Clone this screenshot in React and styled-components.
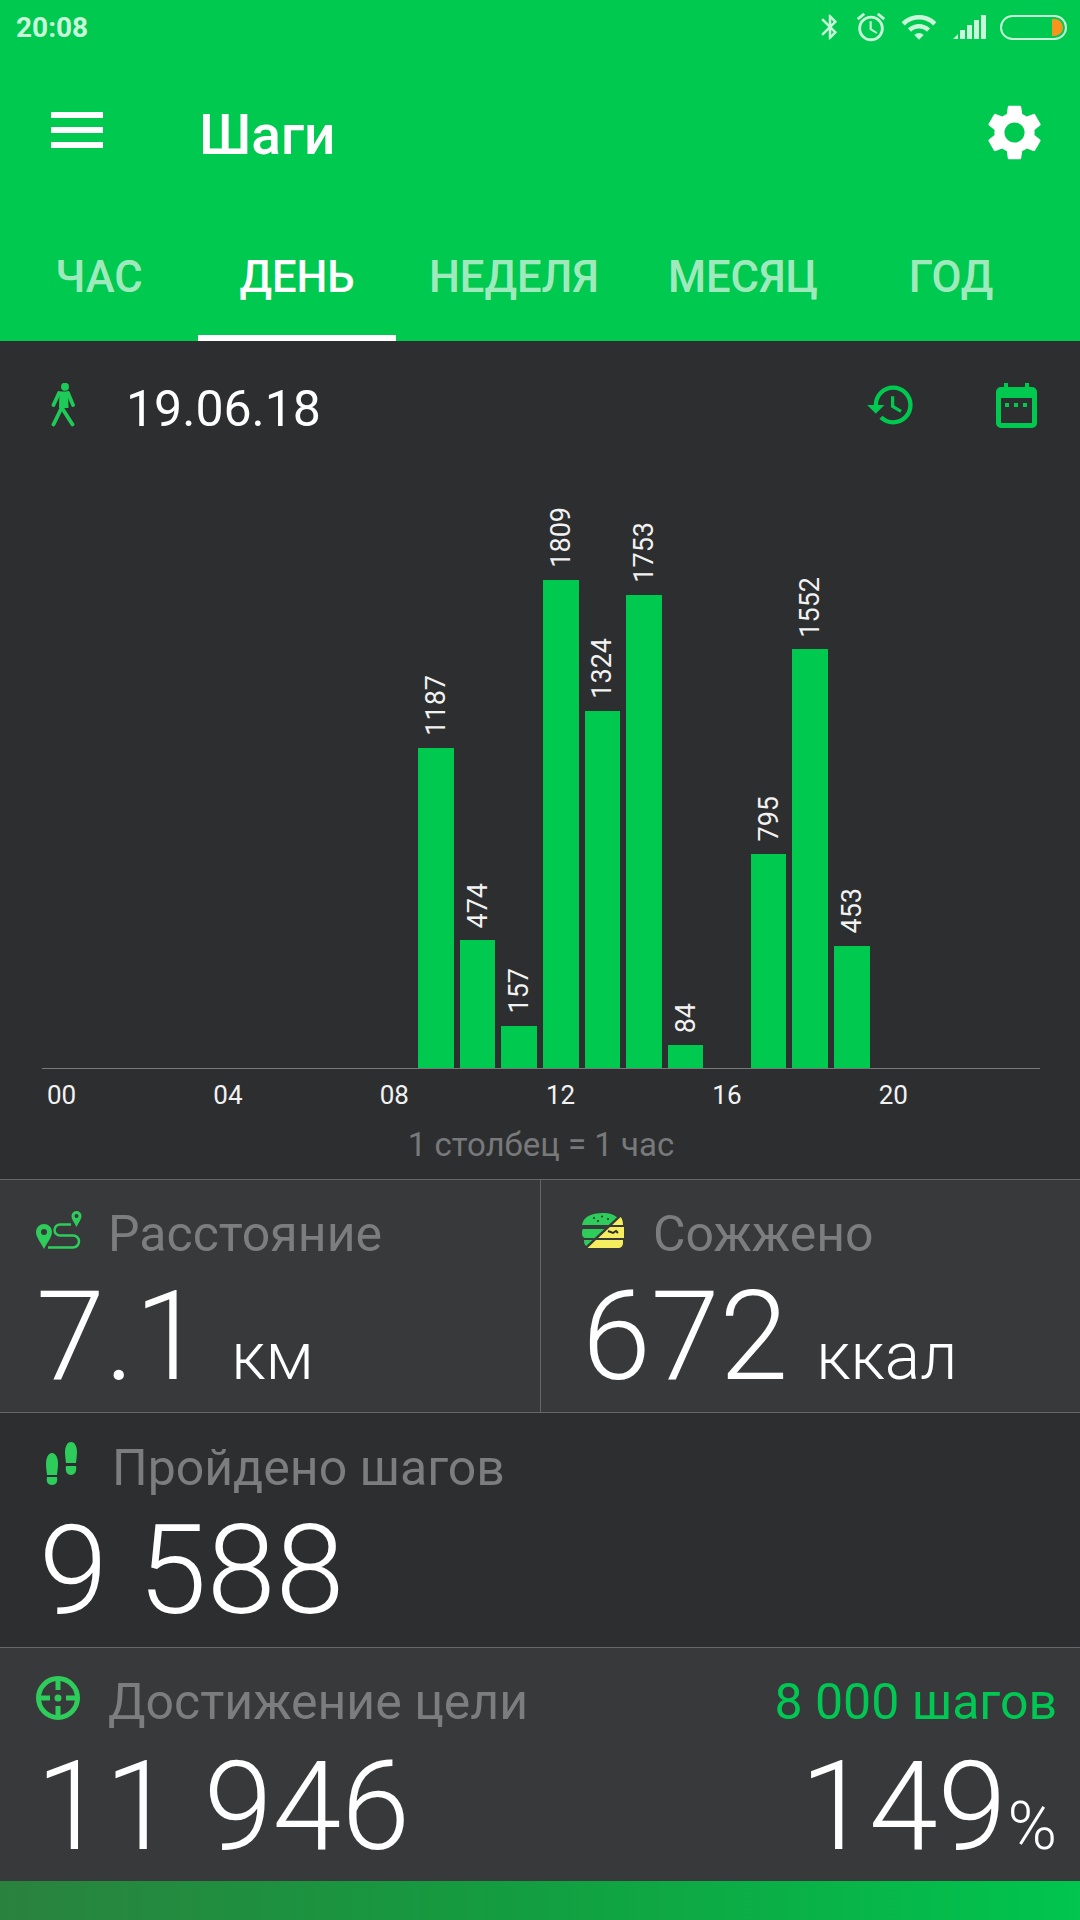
import React from "react";
import styled, { createGlobalStyle } from "styled-components";
import { MdBluetooth, MdAccessAlarm, MdWifi, MdSettings, MdHistory } from "react-icons/md";

const GlobalStyle = createGlobalStyle`
  html, body {
    margin: 0;
    padding: 0;
    background: #2d2e30;
    font-family: Roboto, "Liberation Sans", sans-serif;
  }
`;

const hours = [
  [9, 1187],
  [10, 474],
  [11, 157],
  [12, 1809],
  [13, 1324],
  [14, 1753],
  [15, 84],
  [17, 795],
  [18, 1552],
  [19, 453],
];

const STEP_PX = 488 / 1809;

const App = () => {
  return (
    <Page>
      <GlobalStyle />
      <Header>
        <StatusBar>
          <Clock>20:08</Clock>
          <StatusIcons>
            <MdBluetooth size={30} />
            <StatusSlot $gap={9}>
              <MdAccessAlarm size={34} />
            </StatusSlot>
            <StatusSlot $gap={12}>
              <MdWifi size={38} />
            </StatusSlot>
            <StatusSlot $gap={15}>
              <svg width="34" height="24" viewBox="0 0 34 24" fill="currentColor">
                <path d="M0 24l5-5v5zM7 24v-9h5v9zM14 24V10h5v14zM21 24V5h5v19zM28 24V0h5v24z" />
              </svg>
            </StatusSlot>
            <Battery>
              <BatteryFill />
            </Battery>
          </StatusIcons>
        </StatusBar>
        <Toolbar>
          <Burger>
            <span />
            <span />
            <span />
          </Burger>
          <Title>Шаги</Title>
          <GearButton>
            <MdSettings size={67} />
          </GearButton>
        </Toolbar>
        <Tabs>
          <Tab $width={198}>ЧАС</Tab>
          <Tab $width={198} $active>
            ДЕНЬ
          </Tab>
          <Tab $width={236}>НЕДЕЛЯ</Tab>
          <Tab $width={222}>МЕСЯЦ</Tab>
          <Tab $width={194}>ГОД</Tab>
        </Tabs>
      </Header>

      <DateRow>
        <svg width="24" height="44" viewBox="0 0 24 44" fill="#1fcb58">
          <circle cx="14" cy="3.700" r="4" />
          <path d="M8.500 8.500h8.500l.500 16.500H8z" />
          <path
            fill="none"
            stroke="#1fcb58"
            strokeLinecap="round"
            strokeWidth="3.800"
            d="M8 10L2.500 22M17 10l5 12M10.500 25L2.500 41.500M11 25l10.500 16.500"
          />
        </svg>
        <DateText>19.06.18</DateText>
        <DateActions>
          <MdHistory size={52} color="#00c94f" />
          <svg width="41" height="45" viewBox="0 0 41 45" fill="#00c94f">
            <path
              fillRule="evenodd"
              d="M8 0h4v4h17V0h4v4h3a5 5 0 0 1 5 5v31a5 5 0 0 1-5 5H5a5 5 0 0 1-5-5V9a5 5 0 0 1 5-5h3zM5 15v25h31V15z"
            />
            <path d="M9 20h4v4H9zM18 20h4v4h-4zM27 20h4v4h-4z" />
          </svg>
        </DateActions>
      </DateRow>

      <Chart>
        <Plot>
          {Array.from({ length: 24 }, (_, h) => {
            const item = hours.find((x) => x[0] === h);
            return (
              <Column key={h}>
                {item && (
                  <>
                    <BarLabel>{item[1]}</BarLabel>
                    <Bar style={{ height: item[1] * STEP_PX }} />
                  </>
                )}
              </Column>
            );
          })}
        </Plot>
        <Ticks>
          {["00", "04", "08", "12", "16", "20"].map((t) => (
            <Tick key={t}>{t}</Tick>
          ))}
        </Ticks>
        <Caption>1 столбец = 1 час</Caption>
      </Chart>

      <StatRow $light $height={233}>
        <StatCell $width={541} $divider $top={26}>
          <StatTitle>
            <IconSlot $width={72}>
              <svg width="46" height="38" viewBox="0 0 46 38">
                <path
                  fill="#2ecc5a"
                  fillRule="evenodd"
                  d="M8 13a8 8 0 0 1 8 8c0 5-5 11-8 17-3-6-8-12-8-17a8 8 0 0 1 8-8zm0 5a3 3 0 1 0 0 6 3 3 0 0 0 0-6z"
                />
                <path
                  fill="#2ecc5a"
                  fillRule="evenodd"
                  d="M40.500 0a5 5 0 0 1 5 5c0 3-3 7-5 11-2-4-5-8-5-11a5 5 0 0 1 5-5zm0 3a2 2 0 1 0 0 4 2 2 0 0 0 0-4z"
                />
                <path
                  fill="none"
                  stroke="#2ecc5a"
                  strokeWidth="2.500"
                  d="M35 13.500H24a5.500 5.500 0 0 0 0 11h13a6 6 0 0 1 0 12H12"
                />
              </svg>
            </IconSlot>
            Расстояние
          </StatTitle>
          <Value $top={13}>
            7.1<Unit>км</Unit>
          </Value>
        </StatCell>
        <StatCell $width={539} $pad={41} $top={26}>
          <StatTitle>
            <IconSlot $width={71}>
              <svg width="42" height="35" viewBox="0 0 42 35">
                <g fill="#2ecc5a">
                  <path d="M0 12C1 4 9 0 21 0c6 0 10 1 14 4.300L26.700 12z" />
                  <path d="M1 16h21.400l-9.700 9H4c-3 0-4-2-4-5 0-2 0-3 1-4z" />
                  <path d="M2 27h8.600l-6.400 6C2.500 32 2 30 2 27z" />
                </g>
                <g fill="#f6ee5e">
                  <path d="M38.700 4c1.800 2 2.300 5 2.300 8H30.200z" />
                  <path d="M28 14h14v11H16.200z" />
                  <path d="M14 27h27v3c0 3-2 5-5 5H5.500z" />
                </g>
                <g fill="#2d2e30">
                  <circle cx="12" cy="5" r="1" />
                  <circle cx="20" cy="3.500" r="1" />
                  <circle cx="26" cy="6" r="1" />
                  <circle cx="16" cy="8" r="1" />
                </g>
                <path fill="none" stroke="#2d2e30" strokeWidth="2" d="M26 18l5 2 3-2 2 2" />
              </svg>
            </IconSlot>
            Сожжено
          </StatTitle>
          <Value $top={13}>
            672<Unit>ккал</Unit>
          </Value>
        </StatCell>
      </StatRow>

      <StatRow $height={235}>
        <StatCell $width={1080} $top={27}>
          <StatTitle>
            <IconSlot $width={76} $indent={10}>
              <svg width="31" height="44" viewBox="0 0 31 44" fill="#2ecc5a">
                <path d="M6 11c4 0 6 5 6 11 0 4-1 10-1 11H1c0-1-1-7-1-11 0-6 2-11 6-11zM1 35h10c1 5-1 8-5 8s-6-3-5-8z" />
                <path d="M25 0c4 0 6 5 6 10 0 4-1 10-1 11H20c0-1-1-7-1-11 0-5 2-10 6-10zM20 24h10c1 5-1 9-5 9s-6-4-5-9z" />
              </svg>
            </IconSlot>
            Пройдено шагов
          </StatTitle>
          <Value $left={3} $top={13}>
            9 588
          </Value>
        </StatCell>
      </StatRow>

      <StatRow $light $height={234}>
        <StatCell $width={1080} $top={25}>
          <GoalTop>
            <StatTitle>
              <IconSlot $width={72}>
                <svg width="44" height="44" viewBox="0 0 44 44" fill="none" stroke="#2ecc5a" strokeWidth="5">
                  <circle cx="22" cy="22" r="19.500" />
                  <path d="M22 2v12M22 30v12M2 22h12M30 22h12" />
                  <circle cx="22" cy="22" r="3.500" fill="#2ecc5a" stroke="none" />
                </svg>
              </IconSlot>
              Достижение цели
            </StatTitle>
            <GoalTarget>8 000 шагов</GoalTarget>
          </GoalTop>
          <GoalValues>
            <Value $top={14}>11 946</Value>
            <Value $top={14}>
              149<Percent>%</Percent>
            </Value>
          </GoalValues>
        </StatCell>
      </StatRow>

      <BottomBar />
    </Page>
  );
};

export default App;

const Page = styled.div`
  width: 1080px;
  height: 1920px;
  overflow: hidden;
  display: flex;
  flex-direction: column;
  background: #2d2e30;
  color: #fff;
`;

const Header = styled.header`
  background: #00c94f;
  display: flex;
  flex-direction: column;
`;

const StatusBar = styled.div`
  height: 54px;
  display: flex;
  align-items: center;
  justify-content: space-between;
  padding: 0 13px 0 16px;
  color: #c9f7d9;
`;

const Clock = styled.div`
  font-size: 28px;
  font-weight: 700;
`;

const StatusIcons = styled.div`
  display: flex;
  align-items: center;
`;

const StatusSlot = styled.div`
  display: flex;
  margin-left: ${(p) => p.$gap}px;
`;

const Battery = styled.div`
  width: 67px;
  height: 25px;
  margin-left: 13px;
  box-sizing: border-box;
  border: 2px solid #c9f7d9;
  border-radius: 13px;
  padding: 2px;
  display: flex;
  justify-content: flex-end;
`;

const BatteryFill = styled.div`
  width: 11px;
  background: #f7941d;
  border-radius: 0 9px 9px 0;
`;

const Toolbar = styled.div`
  height: 156px;
  display: flex;
  align-items: center;
  padding: 0 32px 0 51px;
`;

const Burger = styled.div`
  width: 52px;
  display: flex;
  flex-direction: column;
  gap: 9.5px;
  margin-top: -4px;
  span {
    height: 5.5px;
    background: #fff;
  }
`;

const Title = styled.div`
  margin: 6px 0 0 96px;
  font-size: 55px;
  font-weight: 500;
  flex: 1;
`;

const GearButton = styled.div`
  display: flex;
  color: #fff;
`;

const Tabs = styled.div`
  height: 131px;
  display: flex;
`;

const Tab = styled.div`
  width: ${(p) => p.$width}px;
  box-sizing: border-box;
  padding-top: 3px;
  display: flex;
  align-items: center;
  justify-content: center;
  font-size: 43.5px;
  font-weight: 500;
  color: ${(p) => (p.$active ? "#fff" : "rgba(255, 255, 255, 0.65)")};
  box-shadow: ${(p) => (p.$active ? "inset 0 -6px 0 #fff" : "none")};
`;

const DateRow = styled.div`
  height: 128px;
  display: flex;
  align-items: center;
  padding: 0 43px 0 51px;
`;

const DateText = styled.div`
  margin: 8px 0 0 51px;
  font-size: 50px;
  flex: 1;
`;

const DateActions = styled.div`
  display: flex;
  align-items: center;
  gap: 79px;
`;

const Chart = styled.div`
  height: 710px;
  display: flex;
  flex-direction: column;
  padding: 0 40px 0 42px;
`;

const Plot = styled.div`
  height: 600px;
  display: grid;
  grid-template-columns: repeat(24, 1fr);
  border-bottom: 1px solid #77787a;
  box-sizing: border-box;
`;

const Column = styled.div`
  display: flex;
  flex-direction: column;
  justify-content: flex-end;
  align-items: stretch;
  padding: 0 4px 0 2px;
`;

const Bar = styled.div`
  background: #00c94f;
`;

const BarLabel = styled.div`
  writing-mode: vertical-rl;
  transform: rotate(180deg);
  align-self: center;
  font-size: 27px;
  line-height: 30px;
  margin-bottom: 12px;
  color: #f2f2f2;
`;

const Ticks = styled.div`
  height: 52px;
  display: grid;
  grid-template-columns: repeat(6, 1fr);
  align-items: center;
`;

const Tick = styled.div`
  padding-left: 5px;
  font-size: 26px;
  color: #f2f2f2;
`;

const Caption = styled.div`
  height: 46px;
  display: flex;
  align-items: center;
  justify-content: center;
  font-size: 33px;
  color: #77797a;
`;

const StatRow = styled.section`
  height: ${(p) => p.$height}px;
  box-sizing: border-box;
  display: flex;
  background: ${(p) => (p.$light ? "#38393b" : "#2d2e30")};
  border-top: 1px solid #66676a;
`;

const StatCell = styled.div`
  width: ${(p) => p.$width}px;
  box-sizing: border-box;
  padding: ${(p) => p.$top}px 23px 0 ${(p) => p.$pad ?? 36}px;
  border-right: ${(p) => (p.$divider ? "1px solid #66676a" : "none")};
`;

const StatTitle = styled.div`
  height: 56px;
  display: flex;
  align-items: center;
  font-size: 50px;
  color: #7c7d7e;
`;

const IconSlot = styled.div`
  width: ${(p) => p.$width}px;
  box-sizing: border-box;
  padding-left: ${(p) => p.$indent ?? 0}px;
  display: flex;
  align-items: center;
  svg {
    margin-bottom: 8px;
  }
`;

const Value = styled.div`
  margin-top: ${(p) => p.$top}px;
  margin-left: ${(p) => p.$left ?? 0}px;
  font-size: 124px;
  line-height: 124px;
  font-weight: 300;
  color: #fff;
  white-space: nowrap;
`;

const Unit = styled.span`
  margin-left: 28px;
  font-size: 66px;
`;

const Percent = styled.span`
  margin-left: 1px;
  font-size: 67px;
`;

const GoalTop = styled.div`
  display: flex;
  justify-content: space-between;
  align-items: center;
`;

const GoalTarget = styled.div`
  font-size: 50px;
  color: #00c853;
`;

const GoalValues = styled.div`
  display: flex;
  justify-content: space-between;
`;

const BottomBar = styled.div`
  flex: 1;
  background: linear-gradient(90deg, #2a823e 0%, #149c40 46%, #00c54e 100%);
`;
